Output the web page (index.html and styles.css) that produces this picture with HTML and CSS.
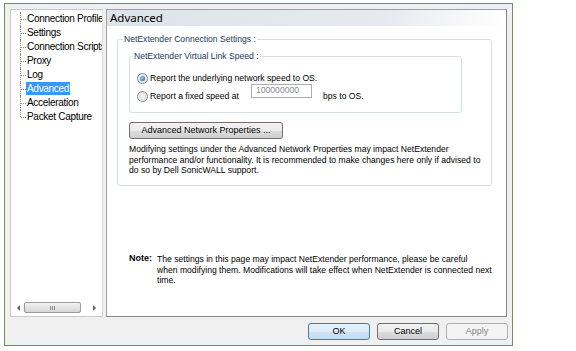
FILE: index.html
```html
<!DOCTYPE html>
<html lang="en">
<head>
    <meta charset="UTF-8">
    <title>NetExtender Properties</title>
    <link rel="stylesheet" href="styles.css">
</head>
<body>
    <div class="window">
        <div class="main">
            <!-- left navigation tree -->
            <div class="tree">
                <ul class="tree-list">
                    <li class="tree-item">Connection Profiles</li>
                    <li class="tree-item">Settings</li>
                    <li class="tree-item">Connection Scripts</li>
                    <li class="tree-item">Proxy</li>
                    <li class="tree-item">Log</li>
                    <li class="tree-item"><span class="selected">Advanced</span></li>
                    <li class="tree-item">Acceleration</li>
                    <li class="tree-item last">Packet Capture</li>
                </ul>
                <div class="hscroll">
                    <span class="arrow arrow-left"></span>
                    <span class="thumb"><span class="grip"></span></span>
                    <span class="arrow arrow-right"></span>
                </div>
            </div>

            <!-- settings page -->
            <div class="panel">
                <div class="panel-title">Advanced</div>
                <fieldset class="group outer">
                    <legend>NetExtender Connection Settings :</legend>
                    <fieldset class="group inner">
                        <legend>NetExtender Virtual Link Speed :</legend>
                        <div class="radio-row">
                            <span class="radio checked"></span>
                            <span>Report the underlying network speed to OS.</span>
                        </div>
                        <div class="radio-row">
                            <span class="radio"></span>
                            <span class="fixed-label">Report a fixed speed at</span>
                            <span class="speed-box">100000000</span>
                            <span>bps to OS.</span>
                        </div>
                    </fieldset>
                    <div class="btn btn-wide">Advanced Network Properties ...</div>
                    <p class="info">Modifying settings under the Advanced Network Properties may impact NetExtender<br>performance and/or functionality. It is recommended to make changes here only if advised to<br>do so by Dell SonicWALL support.</p>
                </fieldset>
                <div class="note">
                    <span class="note-label">Note:</span>
                    <span class="note-text">The settings in this page may impact NetExtender performance, please be careful<br>when modifying them. Modifications will take effect when NetExtender is connected next<br>time.</span>
                </div>
            </div>
        </div>

        <div class="buttons">
            <div class="btn btn-default">OK</div>
            <div class="btn">Cancel</div>
            <div class="btn btn-disabled">Apply</div>
        </div>
    </div>
</body>
</html>
```

FILE: styles.css
```css
body {
    margin: 0;
    padding: 0;
    background-color: #fff;
    font-family: "Liberation Sans", Arial, sans-serif;
}

/* dialog window */
.window {
    margin: 3px 0 0 4px;
    width: 509px;
    height: 343px;
    border: 1px solid #6f8c63;
    background-color: #f0f0f0;
    padding: 5px 0 0 5px;
    box-sizing: border-box;
}

.main {
    display: flex;
    gap: 3px;
    height: 308px;
}

/* navigation tree */
.tree {
    width: 93px;
    box-sizing: border-box;
    border: 1px solid #c8c8c8;
    border-right-color: #dcdcdc;
    background-color: #fff;
    display: flex;
    flex-direction: column;
    justify-content: space-between;
    overflow: hidden;
}

.tree-list {
    list-style: none;
    margin: 2px 0 0 9px;
    padding: 0;
    font-size: 10px;
    letter-spacing: -0.3px;
    color: #000;
}

.tree-item {
    position: relative;
    height: 14px;
    line-height: 14px;
    padding-left: 7px;
    white-space: nowrap;
}

.tree-item::before {
    content: "";
    position: absolute;
    left: 0;
    top: 0;
    bottom: 0;
    border-left: 1px dotted #8a8a8a;
}

.tree-item.last::before {
    bottom: 7px;
}

.tree-item::after {
    content: "";
    position: absolute;
    left: 1px;
    top: 7px;
    width: 5px;
    border-top: 1px dotted #8a8a8a;
}

.selected {
    background-color: #3399ff;
    color: #fff;
    padding: 0 1px;
    margin-left: -1px;
    display: inline-block;
    line-height: 13px;
}

.hscroll {
    display: flex;
    align-items: center;
    height: 13px;
    margin: 0 0 2px 0;
    padding: 0 3px;
    gap: 4px;
}

.arrow {
    width: 0;
    height: 0;
    border-top: 3px solid transparent;
    border-bottom: 3px solid transparent;
}

.arrow-left {
    border-right: 3px solid #606060;
    margin-left: 3px;
}

.arrow-right {
    border-left: 3px solid #606060;
    margin-left: 8px;
}

.thumb {
    width: 57px;
    height: 11px;
    box-sizing: border-box;
    border: 1px solid #9a9a9a;
    border-radius: 2px;
    background: linear-gradient(#f2f2f2, #d6d6d6);
    display: flex;
    justify-content: center;
    align-items: center;
}

.grip {
    width: 5px;
    height: 4px;
    border-left: 1px solid #8a8a8a;
    border-right: 1px solid #8a8a8a;
    box-sizing: border-box;
    position: relative;
}

.grip::after {
    content: "";
    position: absolute;
    left: 1px;
    top: 0;
    height: 4px;
    border-left: 1px solid #8a8a8a;
}

/* settings page */
.panel {
    width: 401px;
    box-sizing: border-box;
    border: 1px solid #a0a0a0;
    border-right-color: #828790;
    border-bottom-color: #828790;
    background-color: #fff;
    font-size: 8.6px;
    color: #000;
}

.panel-title {
    height: 16px;
    line-height: 16px;
    padding-left: 3px;
    font-family: "Noto Sans", "Open Sans", sans-serif;
    font-size: 11.5px;
    background: linear-gradient(to right, #dde3eb 0%, #e6eaf0 70%, #ffffff 100%);
}

.group {
    border: 1px solid #d5dfe5;
    border-radius: 3px;
    margin: 0;
    min-width: 0;
}

.group legend {
    padding: 0 1px;
    margin-left: -6px;
    color: #1e395b;
}

.outer {
    margin: 8px 14px 0 10px;
    padding: 4px 0 11px 11px;
    height: 152px;
    box-sizing: border-box;
}

.inner {
    margin: 3px 29px 0 0;
    padding: 8px 0 6px 7px;
    height: 62px;
    box-sizing: border-box;
}

.inner legend {
    margin-left: -4px;
}

.radio-row {
    display: flex;
    align-items: center;
    height: 18px;
    gap: 2px;
}

.radio {
    width: 11px;
    height: 11px;
    box-sizing: border-box;
    border: 1px solid #8e8f8f;
    border-radius: 50%;
    background: radial-gradient(circle, #f4f4f4 0%, #dcdcdc 100%);
    display: flex;
    justify-content: center;
    align-items: center;
}

.radio.checked::after {
    content: "";
    width: 5px;
    height: 5px;
    border-radius: 50%;
    background: radial-gradient(circle at 40% 40%, #a9d8fb 0%, #1b64b8 80%);
}

.fixed-label {
    width: 99px;
}

.speed-box {
    align-self: flex-start;
    width: 61px;
    height: 14px;
    margin-top: -3px;
    box-sizing: border-box;
    border: 1px solid #abadb3;
    color: #8c8c8c;
    line-height: 10px;
    padding: 0 0 0 4px;
    margin-right: 9px;
}

.btn {
    box-sizing: border-box;
    height: 17px;
    line-height: 15px;
    border: 1px solid #707070;
    border-radius: 3px;
    background: linear-gradient(#f2f2f2 0%, #ebebeb 50%, #dddddd 51%, #cfcfcf 100%);
    text-align: center;
    font-size: 9px;
    color: #000;
}

.btn-wide {
    width: 154px;
    margin-top: 9px;
}

.info {
    margin: 5px 0 0 0;
    line-height: 10.5px;
    white-space: nowrap;
}

.note {
    display: flex;
    margin: 68px 0 0 22px;
    gap: 5px;
    line-height: 10.5px;
    white-space: nowrap;
}

.note-label {
    font-weight: bold;
    font-size: 9px;
    margin-top: -1px;
}

/* dialog buttons */
.buttons {
    display: flex;
    justify-content: flex-end;
    gap: 7px;
    margin-top: 6px;
    padding-right: 4px;
}

.buttons .btn {
    width: 62px;
}

.btn-default {
    border-color: #3c7fb1;
    background: linear-gradient(#e5f1fb 0%, #dcecf8 50%, #cfe4f5 51%, #c3dcf0 100%);
}

.btn-disabled {
    border-color: #adb2b5;
    background: #f4f4f4;
    color: #838383;
}
```
